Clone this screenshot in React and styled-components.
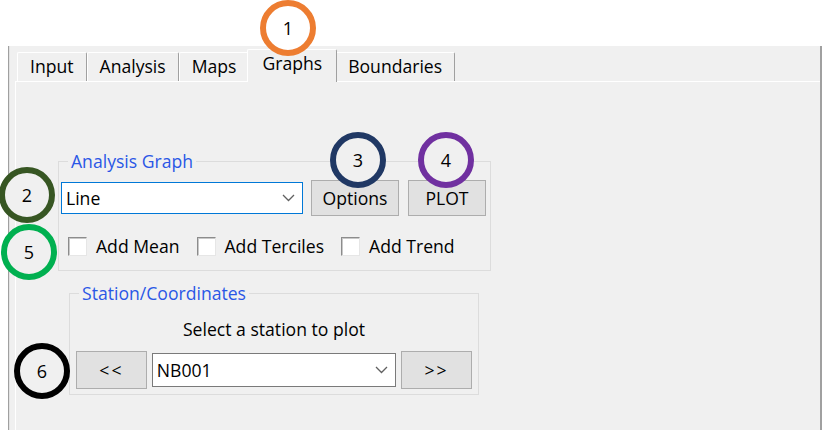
import React from "react";
import styled, { createGlobalStyle } from "styled-components";

const GlobalStyle = createGlobalStyle`
  html, body { margin: 0; padding: 0; background: #fff; }
  body { font-family: "Open Sans", "Noto Sans", sans-serif; }
  * { box-sizing: border-box; }
`;

const Page = styled.div`
  position: relative;
  width: 824px;
  height: 430px;
  padding: 46px 2px 0 8px;
  background: #fff;
  overflow: hidden;
  font-size: 17.6px;
  color: #000;
`;

const Frame = styled.div`
  height: 100%;
  background: #f0f0f0;
  border-left: 1px solid #a0a0a0;
  border-right: 2px solid #a0a0a0;
  box-shadow: inset 1px 0 0 #e3e3e3;
  padding: 3px 0 0 6px;
  display: flex;
  flex-direction: column;
`;

const TabStrip = styled.div`
  display: flex;
  align-items: flex-end;
  height: 32px;
  padding-left: 2px;
`;

const Tab = styled.div`
  position: relative;
  height: ${(p) => (p.$active ? "33px" : "29px")};
  margin: ${(p) => (p.$active ? "0 -2px -1px -2px" : "0")};
  z-index: ${(p) => (p.$active ? 1 : 0)};
  padding: ${(p) => (p.$active ? "0 14px 4px 14px" : "0 12px 1px 12px")};
  display: flex;
  align-items: center;
  background: #f0f0f0;
  border-top: 1px solid #fff;
  border-left: 1px solid #fff;
  border-right: 1px solid #a0a0a0;
  border-top-right-radius: 2px;
  border-top-left-radius: 2px;
  line-height: 1;
  white-space: nowrap;
`;

const Panel = styled.div`
  flex: 1;
  border-top: 1px solid #fff;
  border-left: 1px solid #fff;
`;

const Group = styled.fieldset`
  margin: ${(p) => p.$margin};
  width: ${(p) => p.$width}px;
  padding: 0;
  border: 1px solid #dcdcdc;
  min-width: 0;
`;

const Legend = styled.legend`
  margin-left: 9px;
  padding: 0 3px;
  line-height: 20px;
  color: #2a57e6;
`;

const GroupBody = styled.div`
  padding: ${(p) => p.$padding};
`;

const Row = styled.div`
  display: flex;
  align-items: center;
  gap: ${(p) => p.$gap || 0}px;
  margin-top: ${(p) => p.$top || 0}px;
  padding-left: ${(p) => p.$left || 0}px;
  height: ${(p) => p.$height}px;
`;

const Combo = styled.div`
  width: ${(p) => p.$width}px;
  height: ${(p) => p.$height}px;
  background: #fff;
  border: 1px solid ${(p) => (p.$focused ? "#0078d7" : "#7a7a7a")};
  display: flex;
  align-items: center;
  justify-content: space-between;
  padding: 0 7px 0 4px;
`;

const Button = styled.div`
  width: ${(p) => p.$width}px;
  height: ${(p) => p.$height}px;
  margin-left: ${(p) => p.$ml || 0}px;
  background: #e1e1e1;
  border: 1px solid #adadad;
  display: flex;
  align-items: center;
  justify-content: center;
  letter-spacing: ${(p) => p.$spacing || 0}px;
`;

const CheckItem = styled.label`
  display: flex;
  align-items: center;
  gap: 9px;
`;

const Box = styled.span`
  width: 19px;
  height: 19px;
  background: #fff;
  border: 1px solid;
  border-color: #8c8c8c #e6e6e6 #e6e6e6 #8c8c8c;
  box-shadow: inset 1px 1px 0 #c8c8c8;
`;

const Caption = styled.div`
  margin-top: ${(p) => p.$top}px;
  line-height: 20px;
  text-align: center;
`;

const Marker = styled.div`
  position: absolute;
  left: ${(p) => p.$x - 28}px;
  top: ${(p) => p.$y - 28}px;
  width: 56px;
  height: 56px;
  border-radius: 50%;
  border: 6px solid ${(p) => p.$color};
  background: ${(p) => p.$fill};
  display: flex;
  align-items: center;
  justify-content: center;
  font-family: "Open Sans", sans-serif;
  font-size: 18px;
  color: #000;
  z-index: 5;
`;

const Chevron = () => (
  <svg width="13" height="8" viewBox="0 0 13 8">
    <polyline points="1,1 6.5,6.5 12,1" fill="none" stroke="#606060" strokeWidth="1.3" />
  </svg>
);

const tabs = ["Input", "Analysis", "Maps", "Graphs", "Boundaries"];
const checks = ["Add Mean", "Add Terciles", "Add Trend"];
const markers = [
  { n: 1, x: 288, y: 28, color: "#ed7d31", fill: "#fff" },
  { n: 2, x: 27, y: 195, color: "#375623", fill: "#f0f0f0" },
  { n: 3, x: 358, y: 160, color: "#203864", fill: "#f0f0f0" },
  { n: 4, x: 446, y: 160, color: "#7030a0", fill: "#f0f0f0" },
  { n: 5, x: 29, y: 252, color: "#00b050", fill: "#f0f0f0" },
  { n: 6, x: 42, y: 371, color: "#000000", fill: "#f0f0f0" },
];

export default function App() {
  return (
    <Page>
      <GlobalStyle />
      <Frame>
        <TabStrip>
          {tabs.map((t) => (
            <Tab key={t} $active={t === "Graphs"}>
              {t}
            </Tab>
          ))}
        </TabStrip>
        <Panel>
          <Group $margin="69px 0 0 42px" $width={433}>
            <Legend>Analysis Graph</Legend>
            <GroupBody $padding="0 0 14px 2px">
              <Row $top={9} $height={36}>
                <Combo $width={242} $height={32} $focused>
                  <span>Line</span>
                  <Chevron />
                </Combo>
                <Button $width={88} $height={36} $ml={8}>Options</Button>
                <Button $width={78} $height={36} $ml={9}>PLOT</Button>
              </Row>
              <Row $top={20} $height={20} $left={7} $gap={17}>
                {checks.map((c) => (
                  <CheckItem key={c}>
                    <Box />
                    {c}
                  </CheckItem>
                ))}
              </Row>
            </GroupBody>
          </Group>
          <Group $margin="12px 0 0 53px" $width={410}>
            <Legend>Station/Coordinates</Legend>
            <GroupBody $padding="0 6px 5px 6px">
              <Caption $top={16}>Select a station to plot</Caption>
              <Row $top={12} $height={38} $gap={5}>
                <Button $width={71} $height={38} $spacing={2}>&lt;&lt;</Button>
                <Combo $width={245} $height={34}>
                  <span>NB001</span>
                  <Chevron />
                </Combo>
                <Button $width={71} $height={38} $spacing={2}>&gt;&gt;</Button>
              </Row>
            </GroupBody>
          </Group>
        </Panel>
      </Frame>
      {markers.map((m) => (
        <Marker key={m.n} $x={m.x} $y={m.y} $color={m.color} $fill={m.fill}>
          {m.n}
        </Marker>
      ))}
    </Page>
  );
}
